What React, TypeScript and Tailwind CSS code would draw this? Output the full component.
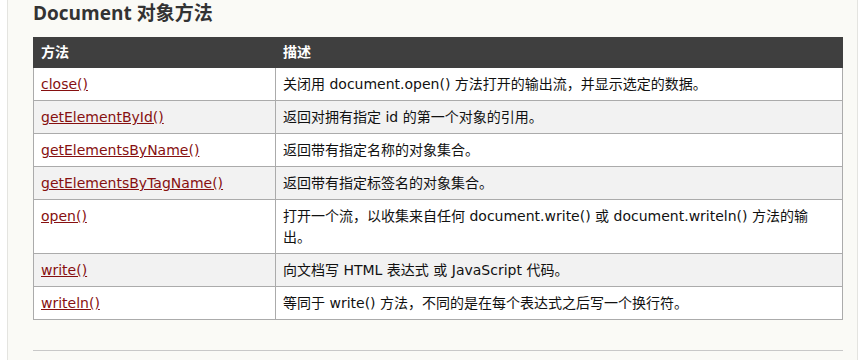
import React from "react";

const rows: { m: string; d: string }[] = [
  { m: "close()", d: "关闭用 document.open() 方法打开的输出流，并显示选定的数据。" },
  { m: "getElementById()", d: "返回对拥有指定 id 的第一个对象的引用。" },
  { m: "getElementsByName()", d: "返回带有指定名称的对象集合。" },
  { m: "getElementsByTagName()", d: "返回带有指定标签名的对象集合。" },
  { m: "open()", d: "打开一个流，以收集来自任何 document.write() 或 document.writeln() 方法的输出。" },
  { m: "write()", d: "向文档写 HTML 表达式 或 JavaScript 代码。" },
  { m: "writeln()", d: "等同于 write() 方法，不同的是在每个表达式之后写一个换行符。" },
];

export default function App() {
  return (
    <div
      className="w-[860px] h-[360px] bg-white overflow-hidden text-[#222]"
      style={{ fontFamily: '"DejaVu Sans", "Noto Sans CJK SC", sans-serif' }}
    >
      <div className="ml-[7px] w-[851px] h-[360px] border-l border-r border-[#e4e4e0] bg-[#fafaf6] pl-[25px] pr-[14px]">
        <h2
          className="text-[19px] leading-[24px] font-bold text-[#333] h-[37px] pt-[1px]"
          style={{ fontFamily: '"Open Sans", "Noto Sans CJK SC", sans-serif' }}
        >
          Document 对象方法
        </h2>
        <table className="w-[810px] table-fixed border-collapse text-[14px]">
          <colgroup>
            <col className="w-[242px]" />
            <col />
          </colgroup>
          <thead>
            <tr className="bg-[#3f3f3f] text-white h-[30px]">
              <th className="text-left font-bold px-[7px] border border-[#3f3f3f]">方法</th>
              <th className="text-left font-bold px-[7px] border border-[#3f3f3f]">描述</th>
            </tr>
          </thead>
          <tbody>
            {rows.map((r, i) => (
              <tr key={r.m} className={i % 2 === 1 ? "bg-[#f2f2f2]" : "bg-white"}>
                <td className="align-top border border-[#ababab] px-[7px] pt-[6px] pb-[5px] leading-[21px]">
                  <a href="#" className="text-[#861010] underline">{r.m}</a>
                </td>
                <td className="align-top border border-[#ababab] px-[7px] pt-[6px] pb-[5px] leading-[21px] text-[#111]">
                  {r.d}
                </td>
              </tr>
            ))}
          </tbody>
        </table>
        <div className="mt-[30px] w-[810px] border-t border-[#c8c8c8]" />
      </div>
    </div>
  );
}
